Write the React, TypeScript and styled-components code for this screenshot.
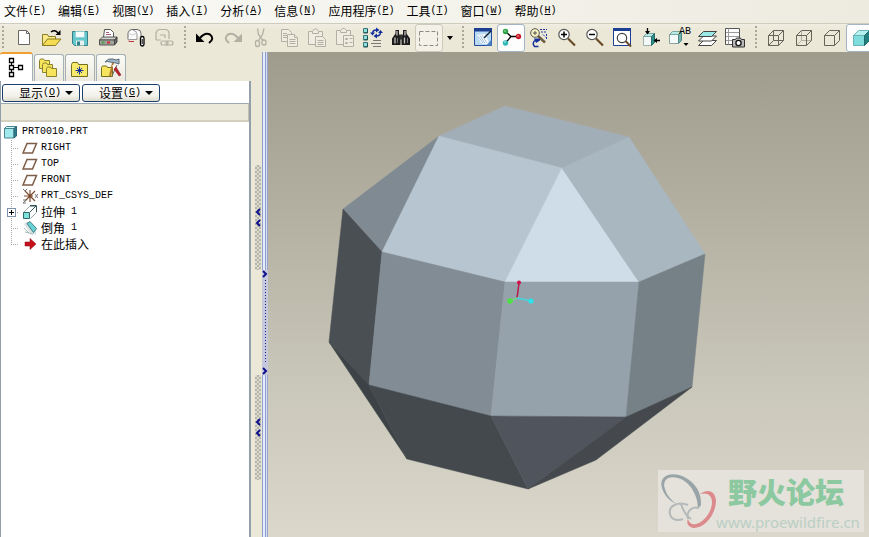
import React from "react";
import styled, { createGlobalStyle, css } from "styled-components";

const GlobalStyle = createGlobalStyle`
  *, *::before, *::after { box-sizing: border-box; }
  html, body, #root { height: 100%; margin: 0; }
  body {
    overflow: hidden;
    font-family: "Noto Sans CJK SC", "Liberation Sans", sans-serif;
    font-size: 12px;
    line-height: 16px;
    color: #000;
    background: #ebe8d8;
  }
  button { font: inherit; color: inherit; }
`;

/* ---------- shell ---------- */

const Window = styled.div`
  display: flex;
  flex-direction: column;
  height: 100%;
`;

const MenuBar = styled.nav`
  display: flex;
  align-items: center;
  flex: none;
  gap: 10px;
  height: 24px;
  padding: 0 2px 2px;
  border-bottom: 1px solid #cfccbb;
  background: linear-gradient(90deg, #fbfbf9, #edebdf);
`;

const MenuItem = styled.button`
  display: flex;
  align-items: center;
  flex: none;
  padding: 0 0 0 2px;
  border: 0;
  background: none;
  white-space: nowrap;
`;

const Latin = styled.span`
  font-family: "Liberation Mono", monospace;
  font-size: 10px;
  white-space: pre;
`;

const Workspace = styled.main`
  display: flex;
  flex: 1;
  min-height: 0;
`;

/* ---------- toolbar ---------- */

const ToolBar = styled.div`
  display: flex;
  flex: none;
  height: 28px;
  padding-left: 1px;
  overflow: hidden;
  background: linear-gradient(#f0eee1, #ebe8d8 6px);
`;

const Grip = styled.span<{ $edge?: boolean }>`
  flex: none;
  width: ${(p) => (p.$edge ? 9 : 13)}px;
  margin: 2px 0;
  background: repeating-linear-gradient(#a9a79b 0 2px, transparent 2px 4px)
    ${(p) => (p.$edge ? "1px" : "center")} 0 / 2px 100% no-repeat;
`;

const ToolButton = styled.button<{ $look?: "on" | "faint" }>`
  display: flex;
  align-items: center;
  justify-content: center;
  flex: none;
  width: 28px;
  height: 28px;
  padding: 0;
  border: 1px solid transparent;
  border-radius: 3px;
  background: none;
  ${(p) =>
    p.$look === "on" &&
    css`
      border-color: #a3b4c4;
      background: #fdfdfd;
    `}
  ${(p) =>
    p.$look === "faint" &&
    css`
      border-color: #cdcabb;
      background: #f3f1e8;
    `}
`;

const DropButton = styled.button`
  display: flex;
  align-items: center;
  justify-content: center;
  flex: none;
  width: 13px;
  padding: 0;
  border: 0;
  background: none;
`;

const Caret = styled.span`
  border: 3px solid transparent;
  border-top: 4px solid #000;
  border-bottom: 0;
`;

const Glyph = styled.svg`
  display: block;
  flex: none;
  width: 24px;
  height: 24px;
`;

/* ---------- navigator ---------- */

const Navigator = styled.aside`
  display: flex;
  flex-direction: column;
  flex: none;
  width: 251px;
`;

const Tabs = styled.div`
  display: flex;
  align-items: flex-end;
  flex: none;
  gap: 1px;
  height: 29px;
`;

const Tab = styled.button<{ $active?: boolean }>`
  display: flex;
  align-items: center;
  justify-content: center;
  width: 30px;
  height: 27px;
  padding: 0;
  border: 1px solid #a4b0b8;
  border-bottom: 0;
  border-radius: 3px 3px 0 0;
  background: linear-gradient(#fbfbf8, #eceade);
  ${(p) =>
    p.$active &&
    css`
      width: 33px;
      height: 29px;
      border: 0;
      border-top: 2px solid #f0a030;
      border-right: 1px solid #a4b0b8;
      background: #fff;
    `}
`;

const Panel = styled.section`
  display: flex;
  flex-direction: column;
  flex: 1;
  border: 1px solid #93a0aa;
  border-width: 0 2px 0 1px;
  background: #fff;
`;

const PanelTools = styled.div`
  display: flex;
  flex: none;
  gap: 2px;
  height: 22px;
  padding: 3px 0 0 1px;
`;

const PanelButton = styled.button`
  display: flex;
  align-items: center;
  justify-content: flex-end;
  width: 78px;
  height: 18px;
  padding: 0 6px;
  border: 1px solid #1c3f6c;
  border-radius: 3px;
  background: linear-gradient(#fff, #f1f0e9 70%, #dedccf);
  ${Latin} { margin-right: 4px; }
  ${Caret} {
    border-width: 4px;
    border-bottom: 0;
  }
`;

const TreeHeader = styled.div`
  flex: none;
  height: 19px;
  border-top: 1px solid #9aa9b4;
  border-bottom: 2px solid #d3d0c0;
  border-right: 1px solid #c2bfae;
  background: #ebe9da;
`;

const Tree = styled.ul`
  margin: 0;
  padding: 2px 0 0;
  list-style: none;
`;

const Row = styled.li<{ $root?: boolean }>`
  display: flex;
  align-items: center;
  gap: 3px;
  height: 16px;
  padding-left: ${(p) => (p.$root ? 2 : 0)}px;
  white-space: nowrap;
`;

const Label = styled.span`
  display: flex;
  align-items: center;
`;

const Branch = styled.span<{ $last?: boolean }>`
  display: flex;
  align-items: center;
  flex: none;
  width: 18px;
  height: 16px;
  padding-left: 6px;
  background:
    repeating-linear-gradient(#a8a8a8 0 1px, transparent 1px 2px) 10px 0 / 1px
      ${(p) => (p.$last ? "50%" : "100%")} no-repeat,
    repeating-linear-gradient(90deg, #a8a8a8 0 1px, transparent 1px 2px) 10px 8px / 8px 1px no-repeat;
`;

const Expander = styled.button`
  display: flex;
  width: 9px;
  height: 9px;
  padding: 0;
  border: 1px solid #7d93ab;
  background:
    linear-gradient(#000, #000) center / 5px 1px no-repeat,
    linear-gradient(#000, #000) center / 1px 5px no-repeat,
    #fff;
`;

const RowIcon = styled.svg`
  flex: none;
  width: 16px;
  height: 16px;
`;

/* ---------- splitter ---------- */

const Rail = styled.div`
  display: flex;
  flex-direction: column;
  align-items: center;
  flex: none;
  gap: 105px;
  width: 11px;
  padding-top: 113px;
  padding-left: 2px;
`;

const Handle = styled.button`
  display: flex;
  flex-direction: column;
  align-items: center;
  justify-content: center;
  gap: 3px;
  width: 6px;
  height: 105px;
  padding: 0;
  border: 0;
  background: conic-gradient(#b4b5aa 25%, #dddccf 0 50%, #b4b5aa 0 75%, #dddccf 0) 0 0 / 4px 4px;
`;

const Sash = styled.div`
  flex: none;
  width: 6px;
  padding-top: 218px;
  background: linear-gradient(90deg, #8e9fce 0 1px, #e6ecfb 1px 3px, #8e9fce 3px 4px, #d5def4 4px 5px, #9aa6c8 5px);
`;

const SashGrip = styled.button`
  display: flex;
  flex-direction: column;
  align-items: center;
  justify-content: space-between;
  width: 6px;
  height: 105px;
  padding: 0;
  border: 0;
  background:
    repeating-linear-gradient(#20208a 0 1px, transparent 1px 3px) 3px 10px / 1px 84px no-repeat,
    #c6c9dc;
`;

const Chevron = styled.svg`
  display: block;
  width: 6px;
  height: 8px;
  fill: none;
  stroke: #10108c;
  stroke-width: 2;
`;

/* ---------- graphics area ---------- */

const Viewport = styled.section`
  position: relative;
  flex: 1;
  min-width: 0;
  overflow: hidden;
  background: linear-gradient(#9f9c8e, #b1aea0 30%, #c9c7b9 68%, #dbd8cb);
`;

const Model = styled.svg`
  display: block;
  width: 100%;
  height: 100%;
`;

const Watermark = styled.a`
  position: absolute;
  right: 5px;
  bottom: 5px;
  display: flex;
  align-items: center;
  width: 206px;
  height: 62px;
  background: #e4e2da;
  text-decoration: none;
`;

const Rings = styled.svg`
  flex: none;
  width: 58px;
  height: 62px;
`;

const Brand = styled.span`
  display: flex;
  flex-direction: column;
  align-items: center;
  width: 144px;
`;

const BrandName = styled.strong`
  padding-right: 4px;
  font-size: 29px;
  font-weight: 900;
  line-height: 42px;
  color: #8cc8a0;
`;

const BrandUrl = styled.span`
  font-family: "Noto Sans", sans-serif;
  font-size: 15px;
  line-height: 20px;
  color: #bbcfc4;
`;

/* ---------- drawings ---------- */

const G = "#b3b0a3";

const paths = {
  fresh: (
    <>
      <path d="M6.500 4.500h8l3 3v11h-11z" fill="#fff" stroke="#666" />
      <path d="M14.500 4.500v3h3" fill="none" stroke="#666" />
    </>
  ),
  open: (
    <>
      <path d="M2.500 19.500v-11h5l1 2h7v3" fill="#f7e98c" stroke="#8c7a20" />
      <path d="M2.500 19.500l5-6.500h13.500l-5.500 6.500z" fill="#f4dc55" stroke="#8c7a20" />
      <path d="M11 6q4-3 7 1" fill="none" stroke="#000" strokeWidth="1.500" />
      <path d="M20.500 4v5h-5z" fill="#000" />
    </>
  ),
  save: (
    <>
      <path d="M4.500 5.500h15v14h-13l-2-2z" fill="#62c8cc" stroke="#3b7f88" />
      <path d="M7.500 5.500h9v6h-9z" fill="#f4fbfb" stroke="#8fd0d4" />
      <path d="M8 14.500h8v5h-8z" fill="#e8efef" />
      <path d="M9 15.500h3v4h-3z" fill="#2f8088" />
    </>
  ),
  print: (
    <>
      <path d="M7.500 11.500l1-8h6l3 3v5" fill="#fff" stroke="#555" />
      <path d="M10 6.500h3M10 8.500h5" stroke="#a05a7a" />
      <path d="M3.500 14l3-3h14.500l-2.500 3z" fill="#d4d2ca" stroke="#555" />
      <path d="M3.500 14h15v5h-15z" fill="#a3a39c" stroke="#555" />
      <path d="M18.500 14l2.500-3v5l-2.500 3z" fill="#6c6c68" stroke="#444" />
      <path d="M5.500 15.500h3v2h-3z" fill="#4c9c50" />
      <path d="M11 15.500h3v2h-3z" fill="#d03030" />
    </>
  ),
  mailClip: (
    <>
      <path d="M4 13.500V7q1-3.500 4-3.500h5q4 0 4 4V10" fill="#fff" stroke="#666" />
      <path d="M4 13.500h9V8q0-3-4-4" fill="#fafafa" stroke="#999" />
      <path d="M4 7l4.500 2L13 7" fill="none" stroke="#ccc" />
      <path d="M5 14.500v1h5" fill="none" stroke="#c03040" />
      <rect x="16.500" y="10.500" width="3.500" height="9.500" rx="1.700" fill="#fff" stroke="#000" strokeWidth="1.300" />
      <path d="M18.200 13v5" stroke="#000" />
    </>
  ),
  mailLink: (
    <g fill="none" stroke={G} strokeWidth="1.200">
      <path d="M4 14V7q1-3.500 4-3.500h5q4 0 4 4V13M4 14h5M8 9h5v3" />
      <rect x="9" y="15" width="7" height="4" rx="2" />
      <rect x="14" y="15" width="7" height="4" rx="2" />
    </g>
  ),
  undo: (
    <>
      <path d="M7 12Q12 6 17 8.500Q22 12.500 16 17" fill="none" stroke="#000" strokeWidth="2" />
      <path d="M3 7.500v8.500h8.500z" fill="#000" />
    </>
  ),
  redo: (
    <>
      <path d="M17 12Q12 6 7 8.500Q2 12.500 8 17" fill="none" stroke={G} strokeWidth="2" />
      <path d="M21 7.500v8.500h-8.500z" fill={G} />
    </>
  ),
  cut: (
    <g fill="none" stroke={G} strokeWidth="1.300">
      <path d="M8.500 2.500l1 6 4.500 6M15 2.500l-1.500 6-4 6" />
      <rect x="6.500" y="14.500" width="4" height="6" rx="2" />
      <rect x="13" y="14" width="4" height="5" rx="2" />
    </g>
  ),
  copy: (
    <g fill="#efede2" stroke={G}>
      <path d="M4.500 3.500h7l3 3v9h-10z" />
      <path d="M6 7.500h4M6 9.500h4M6 11.500h4" />
      <path d="M10.500 8.500h7l3 3v9h-10z" />
      <path d="M17.500 8.500v3h3M12.500 13.500h6M12.500 15.500h6M12.500 17.500h6" />
    </g>
  ),
  paste: (
    <g fill="#efede2" stroke={G}>
      <path d="M3.500 5.500h14v13h-14z" />
      <path d="M7.500 7.500v-2l2-2.500h2l2 2.500v2z" />
      <path d="M10.500 10.500h7l3 3v7h-10z" />
      <path d="M12.500 14.500h6M12.500 16.500h6M12.500 18.500h6" />
    </g>
  ),
  pasteSpecial: (
    <g fill="#efede2" stroke={G}>
      <path d="M3.500 4.500h14v14h-14z" />
      <path d="M7.500 6.500v-2l2-2h2l2 2v2z" />
      <path d="M10.500 9.500h10v11h-10z" />
      <path d="M12.500 12.500h2v1h-2zM12.500 16.500h2v1h-2zM16.500 12.500h3M16.500 16.500h3" />
    </g>
  ),
  regen: (
    <>
      <g fill="#8ee0dc" stroke="#387878">
        <path d="M2.500 2.500h4v4h-4zM2.500 9.500h4v4h-4zM2.500 16.500h4v4h-4z" />
      </g>
      <path d="M6.500 3v4h-4M6.500 10v4h-4M6.500 17v4h-4" fill="none" stroke="#205050" />
      <path d="M11.500 7.500q0-3.500 4-3.500M19.500 6q0 4-4 4" fill="none" stroke="#14309c" strokeWidth="1.500" />
      <path d="M15 1.500l3.500 2.500-3.500 2.500zM16 7.500v5l-3.500-2.500zM9 6.500h5l-2.500 3zM17 7h5l-2.500-3z" fill="#14309c" />
      <path d="M12 14.500h8M10 17.500h10M12 20.500h8" stroke="#777" />
    </>
  ),
  find: (
    <>
      <path d="M6.500 4h3.500v4l1.500 2.500V19H3v-6.500l3.500-5zM14 4h3.500v3.500l3.500 5V19h-8.500v-8.500L14 8z" fill="#1c1c1c" />
      <path d="M10.500 8.500h3v5h-3z" fill="#333" />
      <path d="M8 5v4.500M6 11.500v6M16 5v4.500M15.500 11.500v6" stroke="#c4c4c4" strokeWidth="1.300" />
      <path d="M8.500 12v5M18.500 12v5" stroke="#777" />
    </>
  ),
  select: <path d="M2.500 5.500h18v14h-18z" fill="none" stroke="#8f8d82" strokeDasharray="4 2" />,
  repaint: (
    <>
      <path d="M3.500 2.500h17v17h-17z" fill="#b8daf2" stroke="#234a9c" />
      <path d="M3 2h18v3.500H3z" fill="#1c3f94" />
      <path d="M6 9l8-1 5 11-9-2z" fill="#fff" />
      <path d="M13 12l7-7" stroke="#123" strokeWidth="1.500" />
      <path d="M7 10l5 7M9 9.500l5 8M11 9l5 8" stroke="#9cc0dc" />
      <path d="M15 19.500l5.500-6v6z" fill="#4f86c8" />
    </>
  ),
  spin: (
    <>
      <path d="M6 5l6 5.500L6.500 17M12 10.500h8" fill="none" stroke="#000" strokeWidth="1.300" />
      <circle cx="6.500" cy="5.500" r="2.700" fill="#2fa048" />
      <circle cx="6.500" cy="17" r="2.700" fill="#30b8b4" />
      <circle cx="19.500" cy="10.500" r="2.700" fill="#c41c2c" />
      <circle cx="6" cy="5" r=".8" fill="#b8f0c0" />
      <circle cx="6" cy="16" r=".8" fill="#d0fafa" />
      <circle cx="19" cy="10" r=".8" fill="#f8b0b0" />
    </>
  ),
  reorient: (
    <>
      <path d="M11 10l7 6.500" stroke="#6c5c40" strokeWidth="2.500" />
      <circle cx="8" cy="7" r="4.300" fill="#f7f3c0" stroke="#555" />
      <path d="M8 5v4M6 7h4" stroke="#555" />
      <path d="M13 3.500h7M14 6h6M16 8.500l3 3M19.500 8v6" stroke="#20389c" strokeDasharray="2 1" fill="none" />
      <path d="M8.500 14q-4 3-1 6.500h4" fill="none" stroke="#14309c" strokeWidth="1.500" />
      <path d="M7 12.500h6v2L9 17z" fill="#14309c" />
    </>
  ),
  zoomIn: (
    <>
      <path d="M13 12.500l7 7" stroke="#6a4c28" strokeWidth="2.200" />
      <circle cx="9" cy="8.500" r="5.200" fill="#fff" stroke="#555" strokeWidth="1.200" />
      <path d="M6 8.500h6M9 5.500v6" stroke="#000" strokeWidth="1.500" />
    </>
  ),
  zoomOut: (
    <>
      <path d="M13 12.500l7 7" stroke="#6a4c28" strokeWidth="2.200" />
      <circle cx="9" cy="8.500" r="5.200" fill="#fff" stroke="#555" strokeWidth="1.200" />
      <path d="M6 8.500h6" stroke="#000" strokeWidth="1.500" />
    </>
  ),
  refit: (
    <>
      <path d="M2.500 2.500h17v17h-17z" fill="#fff" stroke="#1c3f94" />
      <path d="M2 2h18v3H2z" fill="#1c3f94" />
      <path d="M14.500 15l5.500 5.500" stroke="#6a4c28" strokeWidth="2" />
      <circle cx="11" cy="12" r="4.700" fill="#fff" stroke="#444" strokeWidth="1.200" />
    </>
  ),
  views: (
    <>
      <path d="M4.500 10.500h8v9h-8z" fill="#f2f9f8" stroke="#9db0ac" />
      <path d="M4.500 10.500l3-3h8l-3 3z" fill="#b8eae6" stroke="#7aa5a2" />
      <path d="M12.500 10.500l3-3v9l-3 3z" fill="#2c8c88" stroke="#256c6a" />
      <path d="M8.500 2v5M21 14.500h-5" stroke="#000" strokeWidth="1.300" />
      <path d="M6 5h5l-2.500 3.500zM18 12v5l-3.500-2.500z" fill="#000" />
    </>
  ),
  layers: (
    <>
      <path d="M3.500 19.500l5-5h13l-5 5z" fill="#fff" stroke="#444" />
      <path d="M3.500 15l5-5h13l-5 5z" fill="#fff" stroke="#444" />
      <path d="M3.500 10.500l5-5h13l-5 5z" fill="#9ae8e6" stroke="#444" />
    </>
  ),
  viewManager: (
    <>
      <path d="M2.500 2.500h14v16h-14z" fill="#fff" stroke="#555" />
      <path d="M5.500 2.500v16M3 6.500h13M3 10.500h13M3 14.500h13" stroke="#9a9a9a" />
      <path d="M9.500 13.500h3l1-1.500h4l1 1.500h3v7.500h-12z" fill="#b8b8b8" stroke="#333" />
      <circle cx="15.500" cy="17" r="2.600" fill="#fff" stroke="#111" strokeWidth="1.300" />
    </>
  ),
  wire: (
    <path
      d="M4.500 9.500h10v10h-10zM9.500 4.500h10v10h-10zM4.500 9.500l5-5M14.500 9.500l5-5M4.500 19.500l5-5M14.500 19.500l5-5"
      fill="none"
      stroke="#66645a"
    />
  ),
  hidden: (
    <g fill="none" stroke="#66645a">
      <path d="M9.500 5v9.500h10M4.500 19.500l5-5" stroke="#b0aea2" />
      <path d="M4.500 9.500h10v10h-10zM4.500 9.500l5-5h10v10l-5 5M14.500 9.500l5-5" />
    </g>
  ),
  noHidden: (
    <path d="M4.500 9.500h10v10h-10zM4.500 9.500l5-5h10v10l-5 5M14.500 9.500l5-5" fill="none" stroke="#66645a" />
  ),
  shaded: (
    <>
      <path d="M5.500 9.500h11v10h-11z" fill="#7fdcdc" stroke="#68b4b4" />
      <path d="M5.500 9.500l5-5h11l-5 5z" fill="#b4f0f0" stroke="#68b4b4" />
      <path d="M16.500 9.500l5-5v10l-5 5z" fill="#238080" stroke="#1c6c6c" />
    </>
  ),
};

type IconName = keyof typeof paths | "annotations";

function Icon({ name }: { name: IconName }) {
  if (name === "annotations") {
    return (
      <Glyph viewBox="0 0 24 24" aria-hidden>
        <path d="M2.500 8.500h9v9h-9z" fill="#f4faf9" stroke="#8ca4a0" />
        <path d="M2.500 8.500l3-3h9l-3 3z" fill="#b8eae6" stroke="#7aa5a2" />
        <path d="M11.500 8.500l3-3v9l-3 3z" fill="#6cb4b0" stroke="#558884" />
        <text x="12" y="8" fontSize="10" fontFamily="Liberation Mono, monospace">AB</text>
        <path d="M16.500 17h5l-2.500 3z" fill="#000" />
      </Glyph>
    );
  }
  return (
    <Glyph viewBox="0 0 24 24" aria-hidden>
      {paths[name]}
    </Glyph>
  );
}

type Tool = { icon: IconName; label: string; look?: "on" | "faint" };

const fileTools: Tool[] = [
  { icon: "fresh", label: "新建" },
  { icon: "open", label: "打开" },
  { icon: "save", label: "保存" },
  { icon: "print", label: "打印" },
  { icon: "mailClip", label: "发送附件" },
  { icon: "mailLink", label: "发送链接" },
];
const editTools: Tool[] = [
  { icon: "undo", label: "撤消" },
  { icon: "redo", label: "重做" },
  { icon: "cut", label: "剪切" },
  { icon: "copy", label: "复制" },
  { icon: "paste", label: "粘贴" },
  { icon: "pasteSpecial", label: "选择性粘贴" },
  { icon: "regen", label: "再生" },
  { icon: "find", label: "查找" },
  { icon: "select", label: "选取", look: "faint" },
];
const viewTools: Tool[] = [
  { icon: "repaint", label: "重画" },
  { icon: "spin", label: "旋转中心", look: "on" },
  { icon: "reorient", label: "定向模式" },
  { icon: "zoomIn", label: "放大" },
  { icon: "zoomOut", label: "缩小" },
  { icon: "refit", label: "重新调整" },
  { icon: "views", label: "重定向" },
  { icon: "annotations", label: "已命名视图" },
  { icon: "layers", label: "层" },
  { icon: "viewManager", label: "视图管理器" },
];
const displayTools: Tool[] = [
  { icon: "wire", label: "线框" },
  { icon: "hidden", label: "隐藏线" },
  { icon: "noHidden", label: "消隐" },
  { icon: "shaded", label: "着色", look: "on" },
];

function Tools({ items }: { items: Tool[] }) {
  return (
    <>
      {items.map((t) => (
        <ToolButton key={t.icon} $look={t.look} aria-label={t.label}>
          <Icon name={t.icon} />
        </ToolButton>
      ))}
    </>
  );
}

const menus: [string, string][] = [
  ["文件", "F"],
  ["编辑", "E"],
  ["视图", "V"],
  ["插入", "I"],
  ["分析", "A"],
  ["信息", "N"],
  ["应用程序", "P"],
  ["工具", "T"],
  ["窗口", "W"],
  ["帮助", "H"],
];

function Mnemonic({ letter }: { letter: string }) {
  return (
    <Latin>
      (<u>{letter}</u>)
    </Latin>
  );
}

const folder = (x: number, y: number) => (
  <path d={`M${x} ${y + 8}v-8l1-1.500h3l1 1.500h5v8z`} fill="#f6e55c" stroke="#8a822c" />
);

const planeIcon = <path d="M5 3.500h9.500l-4 9.500H1z" fill="#fff" stroke="#7d5c48" strokeWidth="1.500" />;

const features: { id: string; cjk?: string; latin?: string; icon: React.ReactNode; expandable?: boolean }[] = [
  { id: "right", latin: "RIGHT", icon: planeIcon },
  { id: "top", latin: "TOP", icon: planeIcon },
  { id: "front", latin: "FRONT", icon: planeIcon },
  {
    id: "csys",
    latin: "PRT_CSYS_DEF",
    icon: (
      <>
        <path d="M8 2v12M3 3l10 10M3 13L13 3M2 8h9" stroke="#7d4c30" strokeWidth="1.200" />
        <path d="M1 1l2 2 2-2M13 6l3 4M16 6l-3 4M1 12h3l-3 3h3" fill="none" stroke="#777" />
      </>
    ),
  },
  {
    id: "extrude",
    cjk: "拉伸",
    latin: " 1",
    expandable: true,
    icon: (
      <>
        <path d="M1.500 8.500l6-6h7v6l-6 6" stroke="#9aa" fill="none" />
        <path d="M8 1.500h6.500V8M8 8l6-6" stroke="#355" fill="none" />
        <path d="M1.500 8.500h6v6h-6z" fill="#7fe0dc" stroke="#2f6c6c" />
      </>
    ),
  },
  {
    id: "chamfer",
    cjk: "倒角",
    latin: " 1",
    icon: (
      <>
        <path d="M2 4l3-2.500 9 8v5h-5z" fill="#d5e3e3" />
        <path d="M5 3.500l3-2 6.500 7-3 4z" fill="#66d4d6" stroke="#4a7c88" />
        <path d="M3 12l8 2M2 8l5 5" stroke="#a9b9b9" />
      </>
    ),
  },
  {
    id: "insert",
    cjk: "在此插入",
    icon: <path d="M3 6h5V2.500L14 8l-6 5.500V10H3z" fill="#c8101c" stroke="#8a0810" strokeWidth=".5" />,
  },
];

const faces: [string, string][] = [
  ["505,106 629,137 562,168 439,136", "#a2aeb7"],
  ["439,136 382,252 343,209", "#808a92"],
  ["439,136 562,168 505,282 382,252", "#b6c5d0"],
  ["562,168 639,282 505,282", "#cedde8"],
  ["629,137 705,254 639,282 562,168", "#a9b7c0"],
  ["343,209 382,252 369,385 329,342", "#4a4f53"],
  ["382,252 505,282 491,416 369,385", "#828c95"],
  ["505,282 639,282 626,417 491,416", "#95a2ac"],
  ["639,282 705,254 692,387 626,417", "#768187"],
  ["329,342 369,385 407,459", "#3d4246"],
  ["369,385 491,416 528,489 407,459", "#44494e"],
  ["491,416 626,417 528,489", "#50545d"],
  ["626,417 692,387 596,460 528,489", "#45494d"],
];

function LeftChevron() {
  return (
    <Chevron viewBox="0 0 6 8">
      <path d="M5 1L2 4l3 3" />
    </Chevron>
  );
}

function RightChevron() {
  return (
    <Chevron viewBox="0 0 6 8">
      <path d="M1 1l3 3-3 3" />
    </Chevron>
  );
}

function CollapseHandle({ label }: { label: string }) {
  return (
    <Handle aria-label={label}>
      <LeftChevron />
      <LeftChevron />
    </Handle>
  );
}

export default function App() {
  return (
    <Window>
      <GlobalStyle />
      <MenuBar>
        {menus.map(([name, letter]) => (
          <MenuItem key={name}>
            {name}
            <Mnemonic letter={letter} />
          </MenuItem>
        ))}
      </MenuBar>
      <ToolBar>
        <Grip $edge />
        <Tools items={fileTools} />
        <Grip />
        <Tools items={editTools} />
        <DropButton aria-label="选取选项">
          <Caret />
        </DropButton>
        <Grip />
        <Tools items={viewTools} />
        <Grip />
        <Tools items={displayTools} />
      </ToolBar>
      <Workspace>
        <Navigator>
          <Tabs>
            <Tab $active aria-label="模型树">
              <Glyph viewBox="0 0 24 24">
                <path d="M5.500 2.500h4v4h-4zM5.500 9.500h4v4h-4zM5.500 16.500h4v4h-4zM14.500 9.500h4v4h-4z" fill="#fff" stroke="#000" strokeWidth="1.300" />
                <path d="M7.500 7v2M7.500 14v2M10 11.500h4" stroke="#000" />
              </Glyph>
            </Tab>
            <Tab aria-label="文件夹浏览器">
              <Glyph viewBox="0 0 24 24">
                {folder(2.5, 4.5)}
                {folder(5.5, 8.5)}
                {folder(9.5, 12.5)}
              </Glyph>
            </Tab>
            <Tab aria-label="收藏夹">
              <Glyph viewBox="0 0 24 24">
                <path d="M3.500 20.500v-12l1-2h5l1 2h9v12z" fill="#f8ea6c" stroke="#77701c" />
                <path d="M11.500 10.500v8M7.500 14.500h8M9 12l5 5M14 12l-5 5" stroke="#14309c" />
              </Glyph>
            </Tab>
            <Tab aria-label="连接">
              <Glyph viewBox="0 0 24 24">
                <path d="M2.500 20.500v-9l1-1.500h4l1 1.500h5v9z" fill="#f6e55c" stroke="#77701c" />
                <path d="M14 7l-3 13" stroke="#b07830" strokeWidth="2" />
                <path d="M6 6q3-4 8-3l3 1 3-1v5l-3-1-6-1q-3-1-5 0z" fill="#9fb6c8" stroke="#5c6c78" />
                <path d="M14 9l6 11" stroke="#fff" strokeWidth="2" />
                <path d="M18 9l-5 11" stroke="#666" />
                <path d="M17 11l5 8-2 1-5-7z" fill="#c02028" stroke="#701018" strokeWidth=".5" />
              </Glyph>
            </Tab>
          </Tabs>
          <Panel>
            <PanelTools>
              <PanelButton>
                显示
                <Mnemonic letter="O" />
                <Caret />
              </PanelButton>
              <PanelButton>
                设置
                <Mnemonic letter="G" />
                <Caret />
              </PanelButton>
            </PanelTools>
            <TreeHeader />
            <Tree>
              <Row $root>
                <RowIcon viewBox="0 0 16 16">
                  <path d="M1.500 4.500h9.500v9.500H1.500z" fill="#9fe8ec" stroke="#4a8490" />
                  <path d="M1.500 4.500l2-2h10l-2.500 2z" fill="#d0f6f6" stroke="#4a8490" />
                  <path d="M11 4.500l2.500-2v9.500l-2.500 2z" fill="#2c7c8c" stroke="#2c6878" />
                </RowIcon>
                <Label>
                  <Latin>PRT0010.PRT</Latin>
                </Label>
              </Row>
              {features.map((f, i) => (
                <Row key={f.id}>
                  <Branch $last={i === features.length - 1}>
                    {f.expandable && <Expander aria-label="展开" />}
                  </Branch>
                  <RowIcon viewBox="0 0 16 16">{f.icon}</RowIcon>
                  <Label>
                    {f.cjk}
                    {f.latin && <Latin>{f.latin}</Latin>}
                  </Label>
                </Row>
              ))}
            </Tree>
          </Panel>
        </Navigator>
        <Rail>
          <CollapseHandle label="收起导航器" />
          <CollapseHandle label="收起面板" />
        </Rail>
        <Sash>
          <SashGrip aria-label="展开浏览器">
            <RightChevron />
            <RightChevron />
          </SashGrip>
        </Sash>
        <Viewport>
          <Model viewBox="268 52 601 485" role="img" aria-label="PRT0010">
            {faces.map(([points, fill]) => (
              <polygon key={points} points={points} fill={fill} stroke={fill} strokeWidth=".5" />
            ))}
            <path d="M517 298l2-15" stroke="#b81848" strokeWidth="1.500" />
            <path d="M510 301l7-3" stroke="#70d880" strokeWidth="1.500" />
            <path d="M517 298l14 3" stroke="#40d8e0" strokeWidth="1.500" />
            <circle cx="519" cy="282.500" r="2" fill="#d01048" />
            <circle cx="510" cy="301" r="2.800" fill="#50e048" />
            <circle cx="531" cy="301" r="2.600" fill="#28e4e8" />
          </Model>
          <Watermark href="http://www.proewildfire.cn">
            <Rings viewBox="0 0 58 62" fill="none">
              <path
                fillRule="evenodd"
                fill="#98a4a8"
                d="M4 18C1 8 9 2 21 5C34 9 44 20 43 35L40 39C40 24 31 11 20 8C10 5 4 10 7 19C9 26 14 31 19 34C11 31 6 25 4 18z"
              />
              <path
                fill="#dc8a8c"
                d="M42 24C50 18 58 21 58 32C57 46 46 58 36 58C30 57 28 53 30 49C31 53 34 55 38 54C46 52 54 42 54 32C54 25 49 22 42 24z"
              />
              <path d="M30 35C20 31 10 36 12 44C13 50 20 51 25 49M30 49C28 41 34 36 41 38M23 34C25 40 28 46 33 49" stroke="#b4b9b9" strokeWidth="2" />
            </Rings>
            <Brand>
              <BrandName>野火论坛</BrandName>
              <BrandUrl>www.proewildfire.cn</BrandUrl>
            </Brand>
          </Watermark>
        </Viewport>
      </Workspace>
    </Window>
  );
}
